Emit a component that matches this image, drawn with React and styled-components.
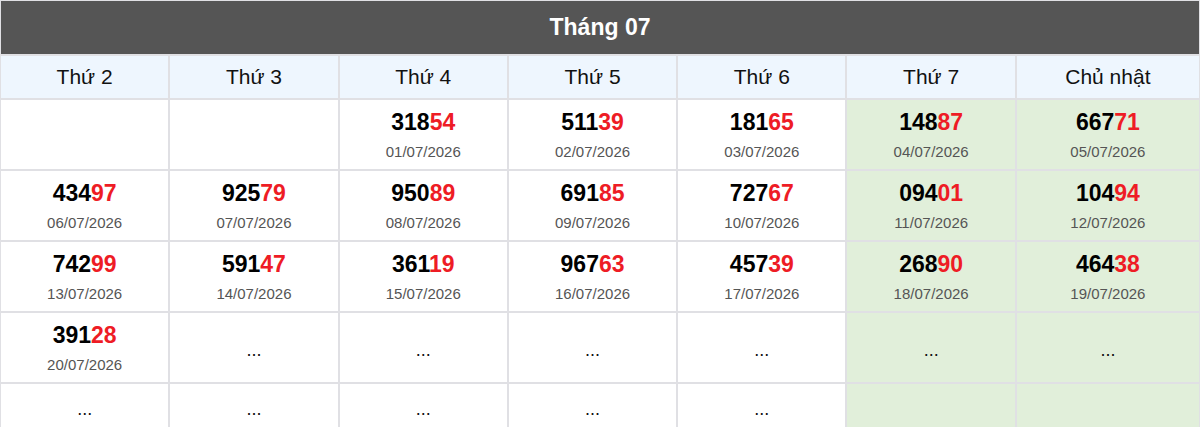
import React from "react";
import styled, { createGlobalStyle } from "styled-components";

const days = ["Thứ 2", "Thứ 3", "Thứ 4", "Thứ 5", "Thứ 6", "Thứ 7", "Chủ nhật"];

// null = empty, "..." = not drawn yet
const results = [
  null, null, "31854", "51139", "18165", "14887", "66771",
  "43497", "92579", "95089", "69185", "72767", "09401", "10494",
  "74299", "59147", "36119", "96763", "45739", "26890", "46438",
  "39128", "...", "...", "...", "...", "...", "...",
  "...", "...", "...", "...", "...", "", "",
];

function App() {
  let day = 0;
  return (
    <>
      <GlobalStyle />
      <Calendar>
        <Title>Tháng 07</Title>
        {days.map((d) => (
          <DayHead key={d}>{d}</DayHead>
        ))}
        {results.map((r, i) => {
          const weekend = i % 7 >= 5;
          if (r === null || r === "") {
            return <Cell key={i} $weekend={weekend} />;
          }
          if (r === "...") {
            return (
              <Cell key={i} $weekend={weekend}>
                <Dots>...</Dots>
              </Cell>
            );
          }
          day += 1;
          const date = String(day).padStart(2, "0") + "/07/2026";
          return (
            <Cell key={i} $weekend={weekend}>
              <Number>
                {r.slice(0, 3)}
                <Red>{r.slice(3)}</Red>
              </Number>
              <DateText>{date}</DateText>
            </Cell>
          );
        })}
      </Calendar>
    </>
  );
}

export default App;

const GlobalStyle = createGlobalStyle`
  body {
    margin: 0;
    background: #fff;
    font-family: "Liberation Sans", Arial, sans-serif;
  }
`;

const Calendar = styled.div`
  display: grid;
  grid-template-columns: repeat(6, 169.3px) 1fr;
  grid-template-rows: 55px 44px repeat(4, 71px) 46px;
  width: 1200px;
  height: 427px;
  overflow: hidden;
`;

const Title = styled.div`
  grid-column: 1 / -1;
  background: #555555;
  border: 1px solid #e0e0e4;
  color: #fff;
  font-weight: bold;
  font-size: 23px;
  display: flex;
  align-items: center;
  justify-content: center;
`;

const DayHead = styled.div`
  background: #eef6fe;
  border: 1px solid #e0e0e4;
  color: #111;
  font-size: 21px;
  display: flex;
  align-items: center;
  justify-content: center;
`;

const Cell = styled.div`
  background: ${(p) => (p.$weekend ? "#e1efda" : "#fff")};
  border: 1px solid #e0e0e4;
  display: flex;
  flex-direction: column;
  align-items: center;
  justify-content: center;
  gap: 8px;
`;

const Number = styled.div`
  font-size: 23px;
  font-weight: bold;
  color: #000;
  line-height: 26px;
`;

const Red = styled.span`
  color: #ee1c25;
`;

const DateText = styled.div`
  font-size: 15px;
  color: #555;
  line-height: 18px;
`;

const Dots = styled.div`
  font-size: 18px;
  color: #111;
  line-height: 18px;
  margin-top: 5px;
`;
